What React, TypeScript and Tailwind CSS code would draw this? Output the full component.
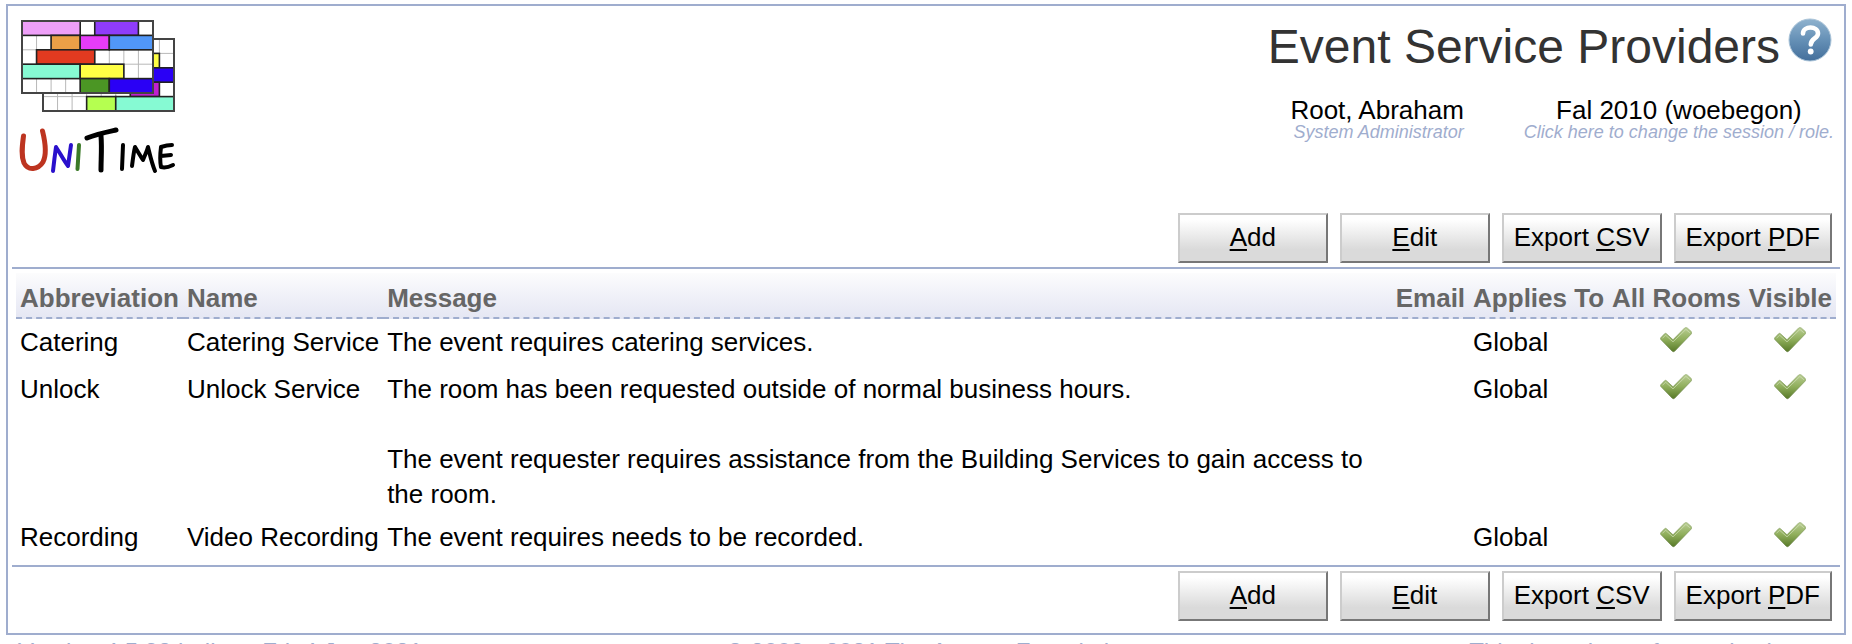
import type { ReactNode } from "react";

const actions: [string, string, string][] = [
  ["", "A", "dd"],
  ["", "E", "dit"],
  ["Export ", "C", "SV"],
  ["Export ", "P", "DF"],
];

const providers: { abbreviation: string; name: string; message: string[] }[] = [
  { abbreviation: "Catering", name: "Catering Service", message: ["The event requires catering services."] },
  {
    abbreviation: "Unlock",
    name: "Unlock Service",
    message: [
      "The room has been requested outside of normal business hours.",
      "The event requester requires assistance from the Building Services to gain access to the room.",
    ],
  },
  { abbreviation: "Recording", name: "Video Recording", message: ["The event requires needs to be recorded."] },
];

function Toolbar() {
  return (
    <div className="flex justify-end gap-3 pr-2">
      {actions.map(([before, key, after]) => (
        <button
          key={key}
          type="button"
          className="h-[50px] min-w-[150px] whitespace-pre border-2 border-t-[#cccccc] border-r-[#777777] border-b-[#777777] border-l-[#cccccc] bg-linear-to-b from-white from-10% to-[#dadada] to-75% px-2.5 pb-0.5 text-[26px] leading-[35px]"
        >
          {before}
          <span className="underline decoration-2 underline-offset-3">{key}</span>
          {after}
        </button>
      ))}
    </div>
  );
}

function Check() {
  return (
    <svg viewBox="0 0 32 26" className="mx-auto mt-1 h-[26px] w-8" role="img" aria-label="Yes">
      <defs>
        <linearGradient id="check" x1="0" y1="0" x2="0" y2="1">
          <stop offset="0" stopColor="#b9cd93" />
          <stop offset="0.5" stopColor="#8fae5b" />
          <stop offset="1" stopColor="#587a28" />
        </linearGradient>
        <linearGradient id="checkEdge" x1="0" y1="0" x2="0" y2="1">
          <stop offset="0" stopColor="#9fb57c" />
          <stop offset="1" stopColor="#5c7735" />
        </linearGradient>
      </defs>
      <path
        d="M0.8 10.800 L4.8 6.6 Q5.6 6 6.4 6.7 L13 12.8 L24.6 1 Q26 0.2 27.300 1 L31.300 4.600 Q32 5.800 31.300 6.900 L14.5 24.3 Q13.4 25.1 12.3 24.2 L0.8 12.400 Q0.300 11.600 0.8 10.800Z"
        fill="url(#check)"
        stroke="url(#checkEdge)"
        strokeWidth="0.8"
      />
      <path d="M2.4 11.400 L5.6 8.200 L13 14.900 L25.9 2.400 L29.900 5.800" fill="none" stroke="#dbe6c4" strokeWidth="1" opacity="0.6" />
    </svg>
  );
}

function HelpIcon() {
  return (
    <svg viewBox="0 0 44 44" className="size-11" aria-hidden="true">
      <defs>
        <linearGradient id="help" x1="0" y1="0" x2="0" y2="1">
          <stop offset="0" stopColor="#8fb2ce" />
          <stop offset="0.5" stopColor="#6590b6" />
          <stop offset="1" stopColor="#446f9b" />
        </linearGradient>
      </defs>
      <circle cx="22" cy="22" r="21" fill="url(#help)" stroke="#a9c3d8" strokeWidth="1" />
      <path d="M15 15.500 C15 7.500 30 7.500 30 15.500 C30 20.500 22.8 20.500 22.8 26.500" fill="none" stroke="#fff" strokeWidth="4.6" strokeLinecap="round" />
      <circle cx="22.7" cy="33.500" r="2.900" fill="#fff" />
    </svg>
  );
}

type Block = [number, number, number, string];

const backBlocks: Block[] = [
  [7, 1, 1, "#ffff45"],
  [7, 2, 2, "#2a00f5"],
  [6, 3, 2, "#c020d0"],
  [3, 4, 2, "#b5ff50"],
  [5, 4, 4, "#86fad3"],
];

const frontBlocks: Block[] = [
  [0, 0, 4, "#ee9ff8"],
  [5, 0, 3, "#8f3cfa"],
  [2, 1, 2, "#eba047"],
  [4, 1, 2, "#e63cf8"],
  [6, 1, 3, "#5197f8"],
  [1, 2, 4, "#e13a20"],
  [0, 3, 4, "#86fad3"],
  [4, 3, 3, "#ffff45"],
  [4, 4, 2, "#4b9624"],
  [6, 4, 3, "#2a00f5"],
];

function Timetable({ x, y, blocks }: { x: number; y: number; blocks: Block[] }) {
  return (
    <g transform={`translate(${x} ${y})`}>
      <rect width="131" height="72" fill="#fff" />
      {[1, 2, 3, 4, 5, 6, 7, 8].map((c) => (
        <path key={c} d={`M${c * 14.55} 0V72`} stroke="#b8b8b8" strokeWidth="1" />
      ))}
      {[1, 2, 3, 4].map((r) => (
        <path key={r} d={`M0 ${r * 14.4}H131`} stroke="#b8b8b8" strokeWidth="1" />
      ))}
      {blocks.map(([c, r, w, fill]) => (
        <rect key={`${c}-${r}`} x={c * 14.55} y={r * 14.4} width={w * 14.55} height="14.4" fill={fill} stroke="#222" strokeWidth="1.6" />
      ))}
      <rect width="131" height="72" fill="none" stroke="#444" strokeWidth="2" />
    </g>
  );
}

function Logo() {
  return (
    <svg viewBox="0 0 168 160" className="h-40 w-[168px]" role="img" aria-label="UniTime">
      <Timetable x={31} y={23} blocks={backBlocks} />
      <Timetable x={10} y={5} blocks={frontBlocks} />
      <g fill="none" strokeLinecap="round" strokeLinejoin="round" transform="translate(2 -1)">
        <path d="M9.5 121C8 132 7 141 10 148C14 156 24 155 29 147C33 139 31 126 28.5 116" stroke="#bd3420" strokeWidth="5" />
        <path d="M39 156C40 147 41 139 42 132C46 138 50 146 54 151C55 144 56 137 57 130" stroke="#2a10cc" strokeWidth="4" />
        <path d="M65 130L63.500 154" stroke="#3b7a28" strokeWidth="4" />
        <path d="M73 123C83 119 93 117 102 115" stroke="#000" strokeWidth="5" />
        <path d="M87 121C88 133 87 144 87 155" stroke="#000" strokeWidth="5" />
        <path d="M109 130L108 154" stroke="#000" strokeWidth="4" />
        <path d="M118 151C119 143 120 136 121 132C124 137 127 142 129 145C131 140 133 136 134 132C136 140 138 149 141 156" stroke="#000" strokeWidth="4" />
        <path d="M158 130C154 130 150 131 147 132C146 140 146 147 147 152C151 153 155 152 159 150M147 141L157 140" stroke="#000" strokeWidth="4" />
      </g>
    </svg>
  );
}

function Heading({ children, className = "" }: { children?: ReactNode; className?: string }) {
  return (
    <th scope="col" className={`pt-2 text-left align-top font-bold ${className}`}>
      <div className="border-b-2 border-dashed border-[#9fadce] px-1 pb-px">{children}</div>
    </th>
  );
}

export default function App() {
  return (
    <div className="min-w-[1200px] bg-white px-1.5 pt-1 font-['Liberation_Sans',Arial,sans-serif] text-black">
      <main className="border-2 border-[#9fadce] px-1 pb-3">
        <header className="flex h-[207px] items-start justify-between pt-2.5">
          <a href="#home" className="block">
            <Logo />
          </a>
          <div className="pr-1.5">
            <div className="flex items-start justify-end gap-2 pr-0.5">
              <h1 className="pt-1 text-[48px] leading-[54px] text-[#333333]">Event Service Providers</h1>
              <a href="#help" aria-label="Help" className="pt-0.5">
                <HelpIcon />
              </a>
            </div>
            <div className="flex justify-end gap-15 pt-[22px] text-center">
              <div>
                <div className="text-[26px] leading-7">Root, Abraham</div>
                <div className="text-right text-[18px] leading-4 text-[#9fadce] italic">System Administrator</div>
              </div>
              <div>
                <div className="text-[26px] leading-7">Fal 2010 (woebegon)</div>
                <a href="#session" className="block text-[18px] leading-4 text-[#9fadce] italic">
                  Click here to change the session / role.
                </a>
              </div>
            </div>
          </div>
        </header>
        <Toolbar />
        <div className="mt-1 border-y-2 border-[#9fadce] px-1 pt-1 pb-1">
          <table className="w-full border-collapse text-[26px] leading-[35px]">
            <thead className="bg-linear-to-b from-[#fcfcfd] to-[#e4e6f3] text-[#666666]">
              <tr>
                <Heading>Abbreviation</Heading>
                <Heading>Name</Heading>
                <Heading className="w-full">Message</Heading>
                <Heading>Email</Heading>
                <Heading>Applies&nbsp;To</Heading>
                <Heading>All&nbsp;Rooms</Heading>
                <Heading>Visible</Heading>
              </tr>
            </thead>
            <tbody>
              {providers.map((p) => (
                <tr key={p.name} className="align-top">
                  <td className="px-1 pt-1.5 pb-1.5 whitespace-nowrap">{p.abbreviation}</td>
                  <td className="px-1 pt-1.5 whitespace-nowrap">{p.name}</td>
                  <td className="px-1 pt-1.5 pb-0.5">
                    {p.message.map((line, i) => (
                      <p key={line} className={i > 0 ? "pt-[35px]" : ""}>
                        {line}
                      </p>
                    ))}
                  </td>
                  <td className="px-1 pt-1.5" />
                  <td className="px-1 pt-1.5">Global</td>
                  <td className="px-1 pt-1">
                    <Check />
                  </td>
                  <td className="px-1 pt-1">
                    <Check />
                  </td>
                </tr>
              ))}
            </tbody>
          </table>
        </div>
        <div className="pt-1">
          <Toolbar />
        </div>
      </main>
      <footer className="grid grid-cols-[1fr_auto_1fr] pt-1 pr-0.5 pl-3 text-[24px] leading-[26px] whitespace-nowrap text-[#9fadce]">
        <span>Version 4.5.98 built on Fri, 4 Jun 2021</span>
        <span>© 2008 - 2021 The Apereo Foundation</span>
        <span className="text-right">This demo is not for production use</span>
      </footer>
    </div>
  );
}
